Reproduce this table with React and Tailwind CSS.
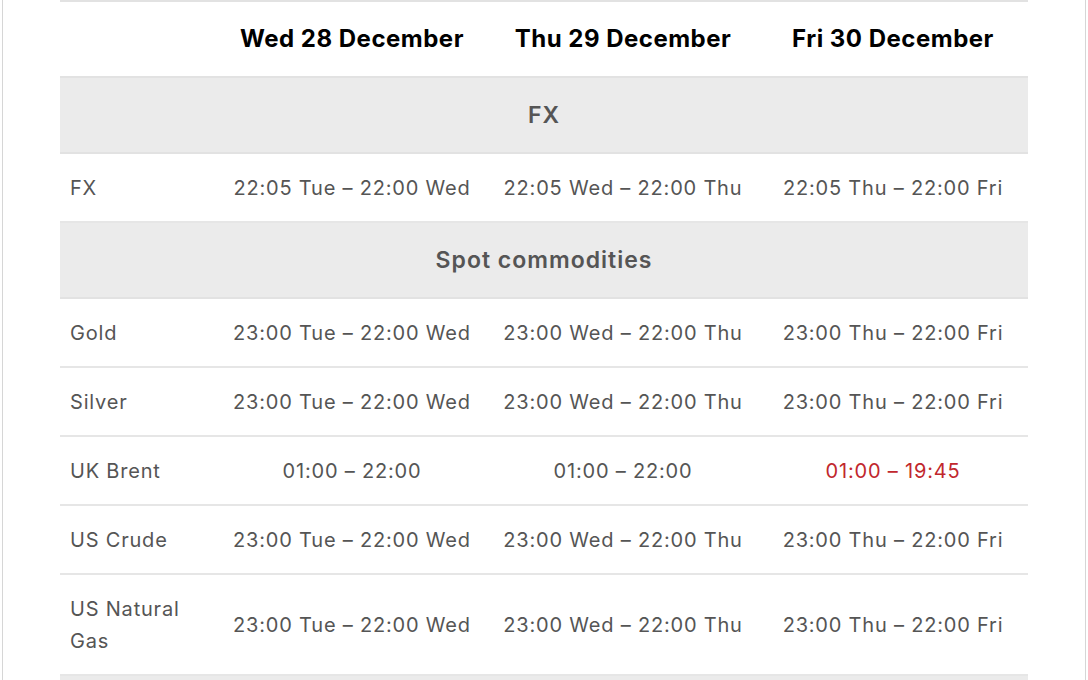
import React from 'react'

const days = ['Wed 28 December', 'Thu 29 December', 'Fri 30 December']

const sections = [
  {
    title: 'FX',
    rows: [
      { name: 'FX', times: ['22:05 Tue – 22:00 Wed', '22:05 Wed – 22:00 Thu', '22:05 Thu – 22:00 Fri'] },
    ],
  },
  {
    title: 'Spot commodities',
    rows: [
      { name: 'Gold', times: ['23:00 Tue – 22:00 Wed', '23:00 Wed – 22:00 Thu', '23:00 Thu – 22:00 Fri'] },
      { name: 'Silver', times: ['23:00 Tue – 22:00 Wed', '23:00 Wed – 22:00 Thu', '23:00 Thu – 22:00 Fri'] },
      { name: 'UK Brent', times: ['01:00 – 22:00', '01:00 – 22:00', '01:00 – 19:45'], alert: 2 },
      { name: 'US Crude', times: ['23:00 Tue – 22:00 Wed', '23:00 Wed – 22:00 Thu', '23:00 Thu – 22:00 Fri'] },
      { name: 'US Natural Gas', times: ['23:00 Tue – 22:00 Wed', '23:00 Wed – 22:00 Thu', '23:00 Thu – 22:00 Fri'] },
    ],
  },
  // next section starts just below the fold
  { title: '', rows: [] },
]

export default function App() {
  return (
    <div className="min-h-screen bg-white" style={{ fontFamily: 'Inter, "Noto Sans", sans-serif' }}>
      <div className="mx-[2px] min-h-screen border-x border-[#d6d6d6] px-[57px]">
        <table className="w-[968px] table-fixed border-collapse">
          <colgroup>
            <col className="w-[156px]" />
            <col className="w-[272px]" />
            <col className="w-[270px]" />
            <col className="w-[270px]" />
          </colgroup>
          <thead>
            <tr className="border-y-2 border-[#e2e2e2]">
              <th />
              {days.map((d) => (
                <th key={d} className="py-[20px] text-center text-[24px] font-bold leading-[34px] tracking-[0.5px] text-black">
                  {d}
                </th>
              ))}
            </tr>
          </thead>
          <tbody>
            {sections.map((s, idx) => (
              <React.Fragment key={idx}>
                <tr className="border-b-2 border-[#e2e2e2] bg-[#ebebeb]">
                  <td colSpan={4} className="h-[74px] py-[20px] text-center text-[23px] font-semibold leading-[34px] tracking-[1px] text-[#555555]">
                    {s.title}
                  </td>
                </tr>
                {s.rows.map((r) => (
                  <tr key={r.name} className="border-b-2 border-[#e6e6e6] text-[20px] leading-[32px] tracking-[0.8px] text-[#555555]">
                    <td className="pl-[10px] pr-[20px] pt-[18px] pb-[17px] text-left">{r.name}</td>
                    {r.times.map((t, i) => (
                      <td
                        key={i}
                        className={`pt-[18px] pb-[17px] text-center ${r.alert === i ? 'text-[#c1272d]' : ''}`}
                      >
                        {t}
                      </td>
                    ))}
                  </tr>
                ))}
              </React.Fragment>
            ))}
          </tbody>
        </table>
      </div>
    </div>
  )
}
